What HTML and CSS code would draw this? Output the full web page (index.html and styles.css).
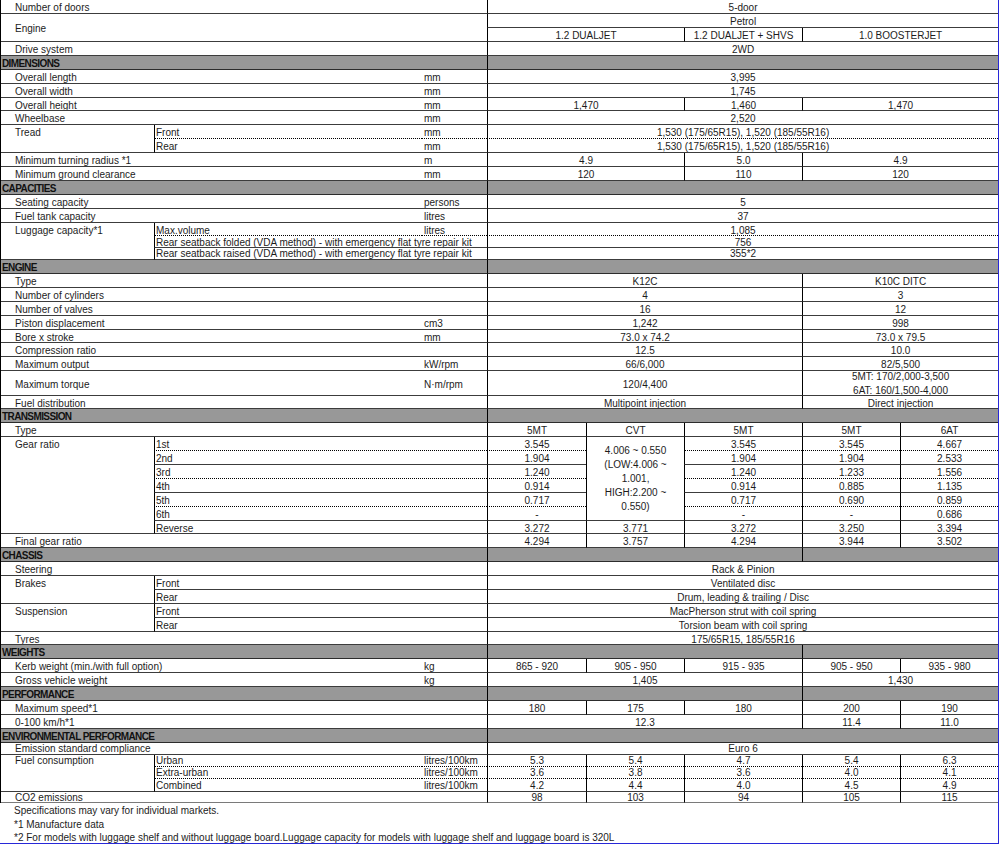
FILE: index.html
```html
<!DOCTYPE html>
<html lang="en">
<head>
<meta charset="utf-8">
<title>Specifications</title>
<link rel="stylesheet" href="styles.css">
</head>
<body>
<div class="page">
<table class="spec">
<colgroup>
<col class="c1"><col class="c2"><col class="c3"><col class="v1"><col class="v2"><col class="v3"><col class="v4"><col class="v5">
</colgroup>
<tbody>
<tr><td class="lbl" colspan="3">Number of doors</td><td class="val" colspan="5">5-door</td></tr>
<tr><td class="lbl" colspan="3" rowspan="2">Engine</td><td class="val" colspan="5">Petrol</td></tr>
<tr><td class="val" colspan="2">1.2 DUALJET</td><td class="val">1.2 DUALJET + SHVS</td><td class="val" colspan="2">1.0 BOOSTERJET</td></tr>
<tr><td class="lbl" colspan="3">Drive system</td><td class="val" colspan="5">2WD</td></tr>

<tr class="sec"><td colspan="3">DIMENSIONS</td><td class="val" colspan="5"></td></tr>
<tr><td class="lbl" colspan="2">Overall length</td><td class="unit">mm</td><td class="val" colspan="5">3,995</td></tr>
<tr><td class="lbl" colspan="2">Overall width</td><td class="unit">mm</td><td class="val" colspan="5">1,745</td></tr>
<tr class="r13"><td class="lbl" colspan="2">Overall height</td><td class="unit">mm</td><td class="val" colspan="2">1,470</td><td class="val">1,460</td><td class="val" colspan="2">1,470</td></tr>
<tr><td class="lbl" colspan="2">Wheelbase</td><td class="unit">mm</td><td class="val" colspan="5">2,520</td></tr>
<tr class="dot"><td class="lbl top span" rowspan="2">Tread</td><td class="sub">Front</td><td class="unit">mm</td><td class="val" colspan="5">1,530 (175/65R15), 1,520 (185/55R16)</td></tr>
<tr><td class="sub">Rear</td><td class="unit">mm</td><td class="val" colspan="5">1,530 (175/65R15), 1,520 (185/55R16)</td></tr>
<tr><td class="lbl" colspan="2">Minimum turning radius *1</td><td class="unit">m</td><td class="val" colspan="2">4.9</td><td class="val">5.0</td><td class="val" colspan="2">4.9</td></tr>
<tr><td class="lbl" colspan="2">Minimum ground clearance</td><td class="unit">mm</td><td class="val" colspan="2">120</td><td class="val">110</td><td class="val" colspan="2">120</td></tr>

<tr class="sec"><td colspan="3">CAPACITIES</td><td class="val" colspan="5"></td></tr>
<tr><td class="lbl" colspan="2">Seating capacity</td><td class="unit">persons</td><td class="val" colspan="5">5</td></tr>
<tr><td class="lbl" colspan="2">Fuel tank capacity</td><td class="unit">litres</td><td class="val" colspan="5">37</td></tr>
<tr class="r13 dot"><td class="lbl top span" rowspan="3">Luggage capacity*1</td><td class="sub">Max.volume</td><td class="unit">litres</td><td class="val" colspan="5">1,085</td></tr>
<tr class="ra"><td class="sub" colspan="2">Rear seatback folded (VDA method) - with emergency flat tyre repair kit</td><td class="val" colspan="5">756</td></tr>
<tr class="rb"><td class="sub" colspan="2">Rear seatback raised (VDA method) - with emergency flat tyre repair kit</td><td class="val" colspan="5">355*2</td></tr>

<tr class="sec"><td colspan="3">ENGINE</td><td class="val" colspan="5"></td></tr>
<tr><td class="lbl" colspan="3">Type</td><td class="val" colspan="3">K12C</td><td class="val" colspan="2">K10C DITC</td></tr>
<tr><td class="lbl" colspan="3">Number of cylinders</td><td class="val" colspan="3">4</td><td class="val" colspan="2">3</td></tr>
<tr><td class="lbl" colspan="3">Number of valves</td><td class="val" colspan="3">16</td><td class="val" colspan="2">12</td></tr>
<tr><td class="lbl" colspan="2">Piston displacement</td><td class="unit">cm3</td><td class="val" colspan="3">1,242</td><td class="val" colspan="2">998</td></tr>
<tr class="r13"><td class="lbl" colspan="2">Bore x stroke</td><td class="unit">mm</td><td class="val" colspan="3">73.0 x 74.2</td><td class="val" colspan="2">73.0 x 79.5</td></tr>
<tr><td class="lbl" colspan="3">Compression ratio</td><td class="val" colspan="3">12.5</td><td class="val" colspan="2">10.0</td></tr>
<tr><td class="lbl" colspan="2">Maximum output</td><td class="unit">kW/rpm</td><td class="val" colspan="3">66/6,000</td><td class="val" colspan="2">82/5,500</td></tr>
<tr class="r25"><td class="lbl" colspan="2">Maximum torque</td><td class="unit">N·m/rpm</td><td class="val" colspan="3">120/4,400</td><td class="val two" colspan="2"><div class="clip"><div class="l1">5MT: 170/2,000-3,500</div><div class="l2">6AT: 160/1,500-4,000</div></div></td></tr>
<tr class="r13"><td class="lbl" colspan="3">Fuel distribution</td><td class="val" colspan="3">Multipoint injection</td><td class="val" colspan="2">Direct injection</td></tr>

<tr class="sec"><td colspan="3">TRANSMISSION</td><td class="val" colspan="5"></td></tr>
<tr><td class="lbl" colspan="3">Type</td><td class="val">5MT</td><td class="val">CVT</td><td class="val">5MT</td><td class="val">5MT</td><td class="val">6AT</td></tr>
<tr class="dot"><td class="lbl top span" rowspan="7">Gear ratio</td><td class="sub" colspan="2">1st</td><td class="val">3.545</td><td class="val cvt span" rowspan="6">4.006 ~ 0.550<br>(LOW:4.006 ~<br>1.001,<br>HIGH:2.200 ~<br>0.550)</td><td class="val">3.545</td><td class="val">3.545</td><td class="val">4.667</td></tr>
<tr><td class="sub" colspan="2">2nd</td><td class="val">1.904</td><td class="val">1.904</td><td class="val">1.904</td><td class="val">2.533</td></tr>
<tr class="dot"><td class="sub" colspan="2">3rd</td><td class="val">1.240</td><td class="val">1.240</td><td class="val">1.233</td><td class="val">1.556</td></tr>
<tr><td class="sub" colspan="2">4th</td><td class="val">0.914</td><td class="val">0.914</td><td class="val">0.885</td><td class="val">1.135</td></tr>
<tr class="dot"><td class="sub" colspan="2">5th</td><td class="val">0.717</td><td class="val">0.717</td><td class="val">0.690</td><td class="val">0.859</td></tr>
<tr><td class="sub" colspan="2">6th</td><td class="val">-</td><td class="val">-</td><td class="val">-</td><td class="val">0.686</td></tr>
<tr class="r13"><td class="sub" colspan="2">Reverse</td><td class="val">3.272</td><td class="val">3.771</td><td class="val">3.272</td><td class="val">3.250</td><td class="val">3.394</td></tr>
<tr><td class="lbl" colspan="3">Final gear ratio</td><td class="val">4.294</td><td class="val">3.757</td><td class="val">4.294</td><td class="val">3.944</td><td class="val">3.502</td></tr>

<tr class="sec"><td colspan="3">CHASSIS</td><td class="val" colspan="3"></td><td class="val" colspan="2"></td></tr>
<tr><td class="lbl" colspan="3">Steering</td><td class="val" colspan="5">Rack &amp; Pinion</td></tr>
<tr><td class="lbl top" rowspan="2">Brakes</td><td class="sub" colspan="2">Front</td><td class="val" colspan="5">Ventilated disc</td></tr>
<tr><td class="sub" colspan="2">Rear</td><td class="val" colspan="5">Drum, leading &amp; trailing / Disc</td></tr>
<tr><td class="lbl top" rowspan="2">Suspension</td><td class="sub" colspan="2">Front</td><td class="val" colspan="5">MacPherson strut with coil spring</td></tr>
<tr><td class="sub" colspan="2">Rear</td><td class="val" colspan="5">Torsion beam with coil spring</td></tr>
<tr class="r13"><td class="lbl" colspan="3">Tyres</td><td class="val" colspan="5">175/65R15, 185/55R16</td></tr>

<tr class="sec"><td colspan="3">WEIGHTS</td><td class="val" colspan="3"></td><td class="val" colspan="2"></td></tr>
<tr><td class="lbl" colspan="2">Kerb weight (min./with full option)</td><td class="unit">kg</td><td class="val">865 - 920</td><td class="val">905 - 950</td><td class="val">915 - 935</td><td class="val">905 - 950</td><td class="val">935 - 980</td></tr>
<tr><td class="lbl" colspan="2">Gross vehicle weight</td><td class="unit">kg</td><td class="val" colspan="3">1,405</td><td class="val" colspan="2">1,430</td></tr>

<tr class="sec"><td colspan="3">PERFORMANCE</td><td class="val" colspan="3"></td><td class="val" colspan="2"></td></tr>
<tr><td class="lbl" colspan="3">Maximum speed*1</td><td class="val">180</td><td class="val">175</td><td class="val">180</td><td class="val">200</td><td class="val">190</td></tr>
<tr><td class="lbl" colspan="3">0-100 km/h*1</td><td class="val" colspan="3">12.3</td><td class="val">11.4</td><td class="val">11.0</td></tr>

<tr class="sec"><td colspan="3">ENVIRONMENTAL PERFORMANCE</td><td class="val" colspan="5"></td></tr>
<tr class="re"><td class="lbl" colspan="3">Emission standard compliance</td><td class="val" colspan="5">Euro 6</td></tr>
<tr class="rb dot"><td class="lbl top span" rowspan="3">Fuel consumption</td><td class="sub">Urban</td><td class="unit">litres/100km</td><td class="val">5.3</td><td class="val">5.4</td><td class="val">4.7</td><td class="val">5.4</td><td class="val">6.3</td></tr>
<tr class="rb dot"><td class="sub">Extra-urban</td><td class="unit">litres/100km</td><td class="val">3.6</td><td class="val">3.8</td><td class="val">3.6</td><td class="val">4.0</td><td class="val">4.1</td></tr>
<tr class="rc"><td class="sub">Combined</td><td class="unit">litres/100km</td><td class="val">4.2</td><td class="val">4.4</td><td class="val">4.0</td><td class="val">4.5</td><td class="val">4.9</td></tr>
<tr class="r11 last"><td class="lbl" colspan="3">CO2 emissions</td><td class="val">98</td><td class="val">103</td><td class="val">94</td><td class="val">105</td><td class="val">115</td></tr>
</tbody>
</table>
<div class="notes">
<p>Specifications may vary for individual markets.</p>
<p>*1 Manufacture data</p>
<p>*2 For models with luggage shelf and without luggage board.Luggage capacity for models with luggage shelf and luggage board is 320L</p>
</div>
</div>
</body>
</html>
```

FILE: styles.css
```css
* {
  box-sizing: border-box;
}

body {
  margin: 0;
  background: #ffffff;
  font-family: "Liberation Sans", Arial, sans-serif;
  color: #1c1c1c;
}

.page {
  width: 999px;
  height: 844px;
  border-right: 1px solid #2828d8;
  border-bottom: 1px solid #2828d8;
  overflow: hidden;
}

.spec {
  width: 998px;
  table-layout: fixed;
  border-collapse: separate;
  border-spacing: 0;
  border-left: 1px solid #000000;
  font-size: 10px;
}

.c1 { width: 153px; }
.c2 { width: 268px; }
.c3 { width: 65px; }
.v1 { width: 99px; }
.v2 { width: 98px; }
.v3 { width: 118px; }
.v4 { width: 98px; }
.v5 { width: 98px; }

.spec tr {
  height: 14px;
}

.spec td {
  padding: 2px 0 0 0;
  line-height: 11px;
  border-bottom: 1px solid #3c3c3c;
  white-space: nowrap;
  overflow: hidden;
  vertical-align: middle;
  text-align: left;
}

/* 13px rows */
.spec tr.r13 { height: 13px; }
.spec tr.r13 > td { padding-top: 3px; line-height: 9px; }

/* 12px luggage "folded" row */
.spec tr.ra { height: 12px; }
.spec tr.ra > td { padding-top: 3px; line-height: 8px; }

/* 12px rows: luggage "raised", urban, extra-urban */
.spec tr.rb { height: 12px; }
.spec tr.rb > td { padding-top: 1px; line-height: 10px; }

/* emission row */
.spec tr.re { height: 12px; }
.spec tr.re > td { padding-top: 0; line-height: 11px; }

/* combined row */
.spec tr.rc { height: 13px; }
.spec tr.rc > td { padding-top: 1px; line-height: 11px; }

/* CO2 row */
.spec tr.r11 { height: 11px; }
.spec tr.r11 > td { padding-top: 2px; line-height: 8px; }

.spec tr.r25 { height: 25px; }

.spec td.lbl {
  padding-left: 14px;
}

.spec td.top {
  vertical-align: top;
}

.spec td.sub {
  padding-left: 1px;
  border-left: 1px solid #000000;
}

.spec td.unit {
  padding-left: 2px;
}

.spec td.val {
  text-align: center;
  border-left: 1px solid #000000;
}

.spec tr.dot > td {
  border-bottom: 1px dotted #000000;
}

.spec tr.dot > td.span {
  border-bottom: 1px solid #3c3c3c;
}

.spec td.cvt {
  white-space: normal;
  line-height: 14px;
  padding-top: 0;
}

.spec tr > td.two {
  vertical-align: top;
  padding-top: 0;
}

.clip {
  height: 24px;
  overflow: hidden;
}

.clip .l1 {
  line-height: 11px;
}

.clip .l2 {
  line-height: 18px;
}

.spec tr.sec > td {
  background: #989898;
  font-weight: bold;
  letter-spacing: -0.6px;
  padding-left: 1px;
  border-bottom: 1px solid #2c2c2c;
  color: #111111;
}

.spec tr.sec > td.val {
  border-left: 1px solid #000000;
}

.spec tr.last > td {
  border-bottom: 1px solid #7a7a7a;
}

.notes {
  padding-top: 1px;
  padding-left: 14px;
  font-size: 10px;
  line-height: 13.5px;
  color: #1c1c1c;
}

.notes p {
  margin: 0;
  white-space: nowrap;
}
```
